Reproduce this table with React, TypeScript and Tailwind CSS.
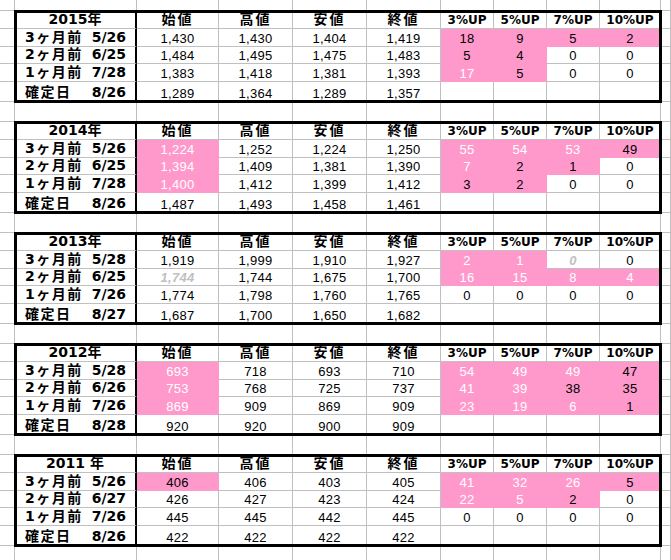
import clsx from "clsx";

// cell codes: "1,430" plain, "18*" pink / black text, "17^" pink / white text, "0~" grey italic
type Row = { label: string; date: string; prices: string[]; ups: string[] };
type Block = { year: string; rows: Row[] };

const blocks: Block[] = [
  {
    year: "2015年",
    rows: [
      { label: "3ヶ月前", date: "5/26", prices: ["1,430", "1,430", "1,404", "1,419"], ups: ["18*", "9*", "5*", "2*"] },
      { label: "2ヶ月前", date: "6/25", prices: ["1,484", "1,495", "1,475", "1,483"], ups: ["5*", "4*", "0", "0"] },
      { label: "1ヶ月前", date: "7/28", prices: ["1,383", "1,418", "1,381", "1,393"], ups: ["17^", "5*", "0", "0"] },
      { label: "確定日", date: "8/26", prices: ["1,289", "1,364", "1,289", "1,357"], ups: ["", "", "", ""] },
    ],
  },
  {
    year: "2014年",
    rows: [
      { label: "3ヶ月前", date: "5/26", prices: ["1,224^", "1,252", "1,224", "1,250"], ups: ["55^", "54^", "53^", "49*"] },
      { label: "2ヶ月前", date: "6/25", prices: ["1,394^", "1,409", "1,381", "1,390"], ups: ["7^", "2*", "1*", "0"] },
      { label: "1ヶ月前", date: "7/28", prices: ["1,400^", "1,412", "1,399", "1,412"], ups: ["3*", "2*", "0", "0"] },
      { label: "確定日", date: "8/26", prices: ["1,487", "1,493", "1,458", "1,461"], ups: ["", "", "", ""] },
    ],
  },
  {
    year: "2013年",
    rows: [
      { label: "3ヶ月前", date: "5/28", prices: ["1,919", "1,999", "1,910", "1,927"], ups: ["2^", "1^", "0~", "0"] },
      { label: "2ヶ月前", date: "6/25", prices: ["1,744~", "1,744", "1,675", "1,700"], ups: ["16^", "15^", "8^", "4^"] },
      { label: "1ヶ月前", date: "7/26", prices: ["1,774", "1,798", "1,760", "1,765"], ups: ["0", "0", "0", "0"] },
      { label: "確定日", date: "8/27", prices: ["1,687", "1,700", "1,650", "1,682"], ups: ["", "", "", ""] },
    ],
  },
  {
    year: "2012年",
    rows: [
      { label: "3ヶ月前", date: "5/28", prices: ["693^", "718", "693", "710"], ups: ["54^", "49^", "49^", "47*"] },
      { label: "2ヶ月前", date: "6/26", prices: ["753^", "768", "725", "737"], ups: ["41^", "39^", "38*", "35*"] },
      { label: "1ヶ月前", date: "7/26", prices: ["869^", "909", "869", "909"], ups: ["23^", "19^", "6^", "1*"] },
      { label: "確定日", date: "8/28", prices: ["920", "920", "900", "909"], ups: ["", "", "", ""] },
    ],
  },
  {
    year: "2011 年",
    rows: [
      { label: "3ヶ月前", date: "5/26", prices: ["406*", "406", "403", "405"], ups: ["41^", "32^", "26^", "5*"] },
      { label: "2ヶ月前", date: "6/27", prices: ["426", "427", "423", "424"], ups: ["22^", "5^", "2*", "0"] },
      { label: "1ヶ月前", date: "7/26", prices: ["445", "445", "442", "445"], ups: ["0", "0", "0", "0"] },
      { label: "確定日", date: "8/26", prices: ["422", "422", "422", "422"], ups: ["", "", "", ""] },
    ],
  },
];

const heads = ["始値", "高値", "安値", "終値"];
const ups = ["3%UP", "5%UP", "7%UP", "10%UP"];

// widths of columns C..J
const colW = ["w-[82px]", "w-[74px]", "w-[74px]", "w-[74px]", "w-[53px]", "w-[53px]", "w-[53px]", "w-[61px]"];
// header, three month rows, 確定日
const rowH = ["h-[18px]", "h-[18px]", "h-[17px]", "h-[18px]", "h-[20px]"];

const grid = "box-border shrink-0 border-r border-b border-[#c0c0c0]";

function Cell({ code, w, h }: { code: string; w: string; h: string }) {
  const mark = code.slice(-1);
  const special = mark === "*" || mark === "^" || mark === "~";
  const text = special ? code.slice(0, -1) : code;
  const pink = mark === "*" || mark === "^";
  return (
    <div
      className={clsx(
        "box-border shrink-0 flex items-end justify-center border-r border-b font-['Liberation_Sans',sans-serif] text-[13px] leading-[15px] tracking-[0.3px]",
        w,
        h,
        pink ? "bg-[#ff99cc] border-[#ff99cc]" : "border-[#c0c0c0]",
        mark === "^" ? "text-white" : mark === "~" ? "text-[#c0c0c0] italic font-bold" : "text-black"
      )}
    >
      {text}
    </div>
  );
}

function BlankRow({ h }: { h: string }) {
  return (
    <div className="flex">
      <div className={clsx(grid, "w-[15px]", h)} />
      <div className={clsx(grid, "w-[122px]", h)} />
      {colW.map((w, i) => (
        <div key={i} className={clsx(grid, w, h)} />
      ))}
      <div className={clsx(grid, "flex-1", h)} />
    </div>
  );
}

function Table({ block }: { block: Block }) {
  return (
    <>
      <div className="flex">
        <div className="flex flex-col">
          {rowH.map((h, i) => (
            <div key={i} className={clsx(grid, "w-[15px]", h)} />
          ))}
        </div>

        <div className="relative z-10 flex flex-col outline-[3px] outline-black outline-offset-[-2px]">
          <div className="flex">
            <div className={clsx(grid, "w-[122px] h-[18px] flex items-end justify-center pb-[1px] border-r-2 border-r-black text-[14px] leading-[16px] font-bold")}>
              {block.year}
            </div>
            {heads.map((t, i) => (
              <div key={t} className={clsx(grid, colW[i], "h-[18px] flex items-end justify-center pb-[1px] text-[14px] leading-[16px] font-bold tracking-[2px]")}>
                {t}
              </div>
            ))}
            {ups.map((t, i) => (
              <div key={t} className={clsx(grid, colW[i + 4], "h-[18px] flex items-end justify-center pb-[1px] text-[12px] leading-[14px] font-bold")}>
                {t}
              </div>
            ))}
          </div>

          {block.rows.map((r, ri) => (
            <div key={r.label} className="flex">
              <div className={clsx(grid, "w-[122px] flex items-end justify-between pl-[10px] pr-[9px] pb-[1px] border-r-2 border-r-black text-[14px] leading-[16px] font-bold", rowH[ri + 1])}>
                <span className="tracking-[1.5px]">{r.label}</span>
                <span>{r.date}</span>
              </div>
              {r.prices.map((p, i) => (
                <Cell key={i} code={p} w={colW[i]} h={rowH[ri + 1]} />
              ))}
              {r.ups.map((u, i) => (
                <Cell key={i + 4} code={u} w={colW[i + 4]} h={rowH[ri + 1]} />
              ))}
            </div>
          ))}
        </div>

        <div className="flex flex-1 flex-col">
          {rowH.map((h, i) => (
            <div key={i} className={clsx(grid, "w-full", h)} />
          ))}
        </div>
      </div>
      <BlankRow h="h-[20px]" />
    </>
  );
}

export default function App() {
  return (
    <div className="w-[671px] h-[560px] overflow-hidden bg-white text-black font-['DejaVu_Sans','Noto_Sans_CJK_JP',sans-serif]">
      <BlankRow h="h-[11px]" />
      {blocks.map((b) => (
        <Table key={b.year} block={b} />
      ))}
    </div>
  );
}
